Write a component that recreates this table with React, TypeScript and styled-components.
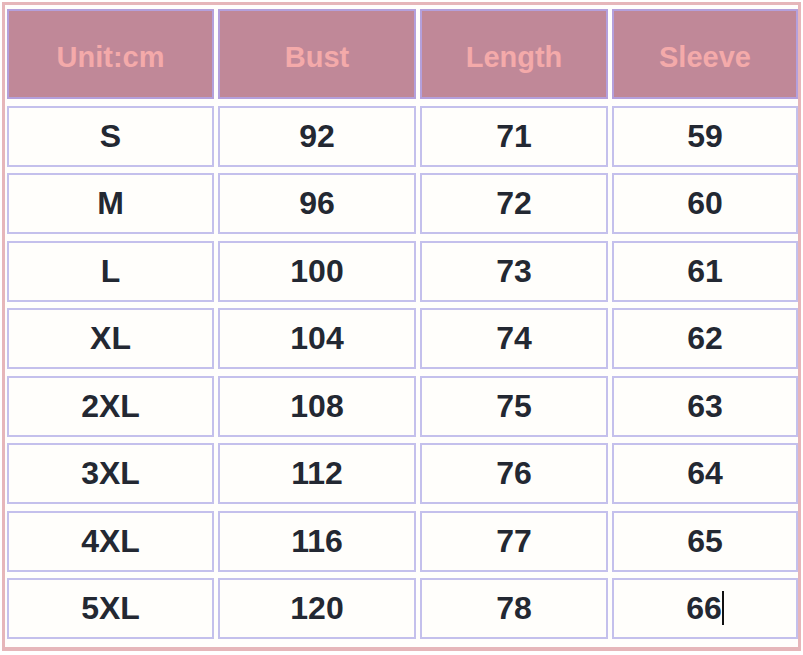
import React from "react"
import styled, { createGlobalStyle } from "styled-components"

const GlobalStyle = createGlobalStyle`
  html, body {
    margin: 0;
    padding: 0;
    background: #ffffff;
  }
  body {
    font-family: "Liberation Sans", Arial, sans-serif;
  }
`

const Frame = styled.div`
  box-sizing: border-box;
  margin: 2px 0 0 2px;
  width: 799px;
  height: 649px;
  border: 3px solid #e6b6ba;
  border-bottom-width: 4px;
  padding: 4px 1px 0 2px;
  background: #fffefc;
`

const Grid = styled.div`
  display: grid;
  grid-template-columns: 207px 198px 188px 186px;
  grid-template-rows: 90px repeat(8, 61px);
  column-gap: 4px;
  row-gap: 6.5px;
  height: fit-content;
`

const Cell = styled.div<{ $head?: boolean }>`
  box-sizing: border-box;
  display: flex;
  align-items: center;
  justify-content: center;
  border: 2px solid ${({ $head }) => ($head ? "#b4a0dc" : "#c4c0ec")};
  background: ${({ $head }) => ($head ? "#c08898" : "#fffefb")};
  color: ${({ $head }) => ($head ? "#f4aaaa" : "#232832")};
  font-weight: bold;
  font-size: ${({ $head }) => ($head ? "29px" : "32px")};
  padding-top: ${({ $head }) => ($head ? "6px" : "0")};
`

const Caret = styled.span`
  display: inline-block;
  width: 2px;
  height: 34px;
  background: #111;
  margin-left: 0;
  vertical-align: middle;
  position: relative;
  top: -2px;
`

const headers = ["Unit:cm", "Bust", "Length", "Sleeve"]

const rows = [
  ["S", "92", "71", "59"],
  ["M", "96", "72", "60"],
  ["L", "100", "73", "61"],
  ["XL", "104", "74", "62"],
  ["2XL", "108", "75", "63"],
  ["3XL", "112", "76", "64"],
  ["4XL", "116", "77", "65"],
  ["5XL", "120", "78", "66"],
]

export default function App() {
  return (
    <>
      <GlobalStyle />
      <Frame>
        <Grid>
          {headers.map((h) => (
            <Cell $head key={h}>
              {h}
            </Cell>
          ))}
          {rows.map((r, i) =>
            r.map((v, j) => (
              <Cell key={`${i}-${j}`}>
                <span>
                  {v}
                  {i === rows.length - 1 && j === 3 && <Caret />}
                </span>
              </Cell>
            ))
          )}
        </Grid>
      </Frame>
    </>
  )
}
